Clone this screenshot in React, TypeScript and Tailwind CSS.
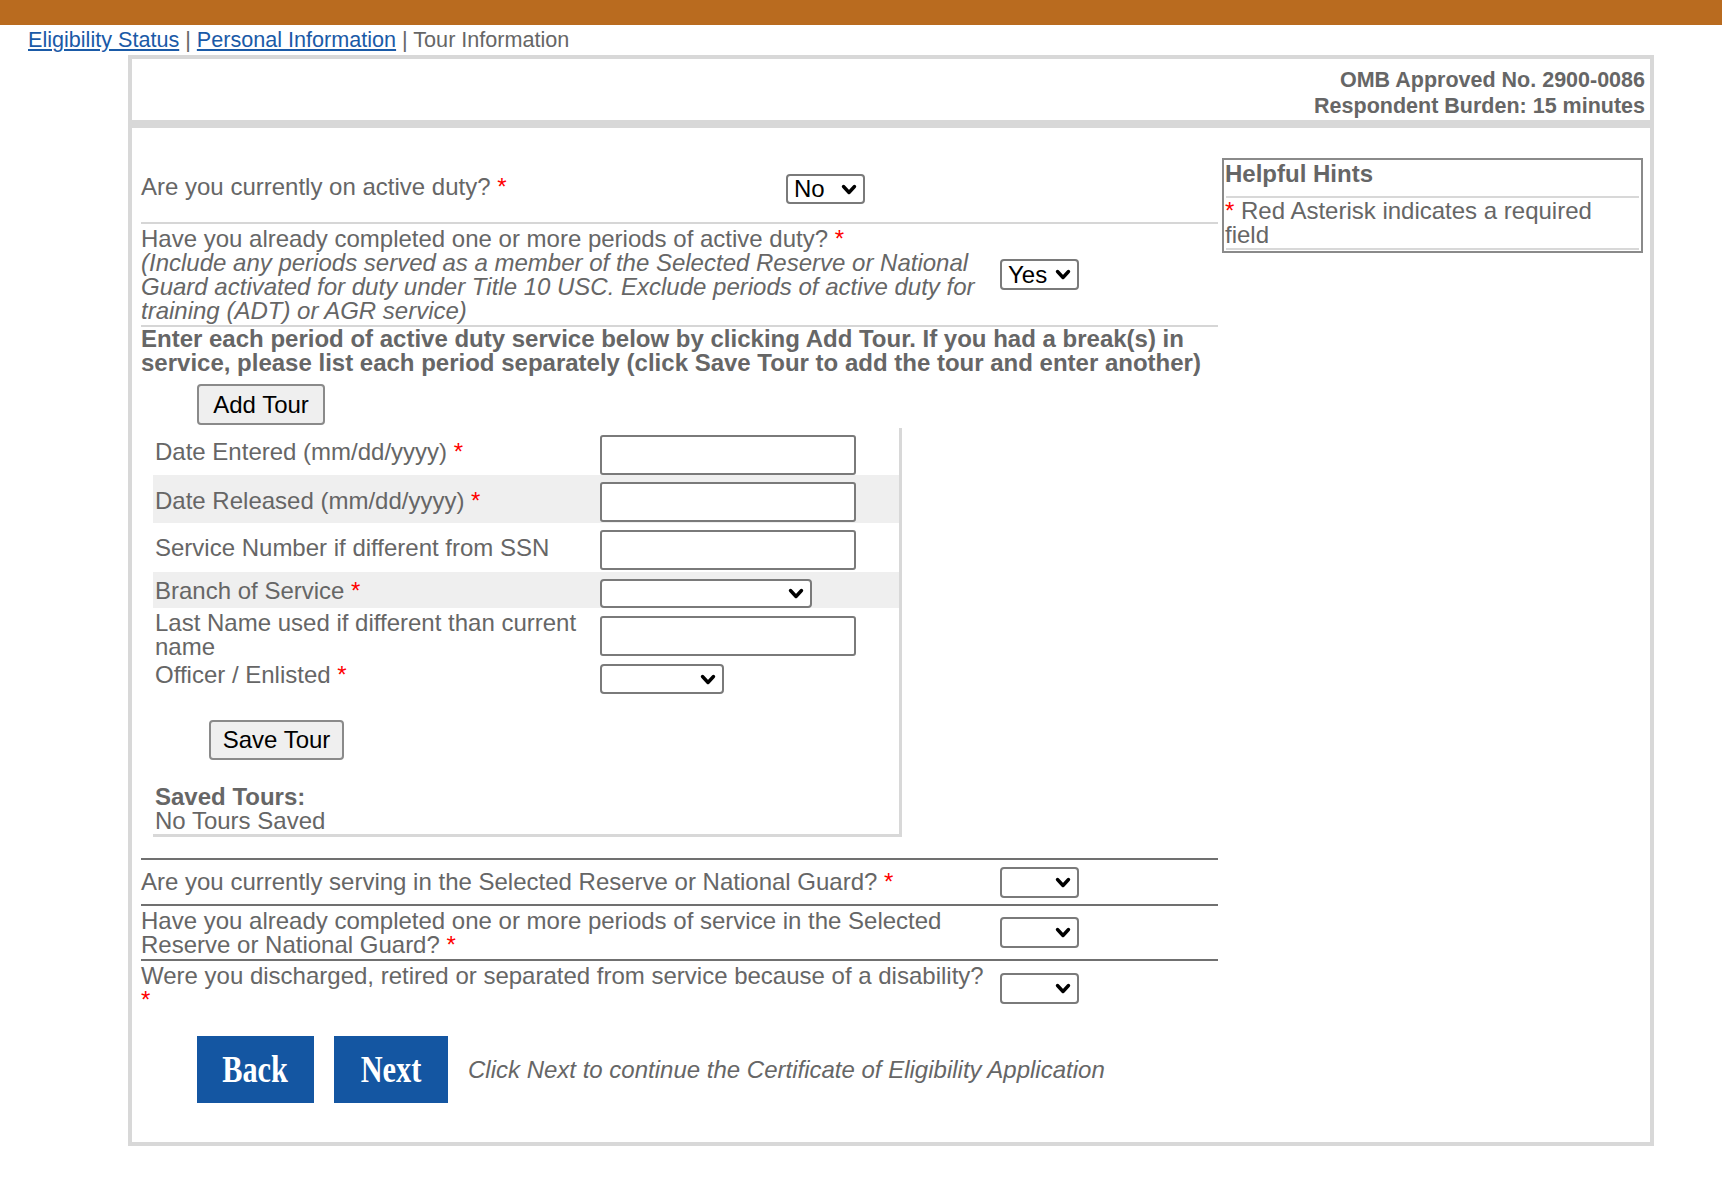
import React from "react";

function Req() {
  return <span className="text-[#ff0000]"> *</span>;
}

function Chevron() {
  return (
    <svg width="16" height="11" viewBox="0 0 16 11" className="shrink-0">
      <polyline points="2.5,2.5 8,8.5 13.5,2.5" fill="none" stroke="#000" strokeWidth="3.4" strokeLinecap="round" strokeLinejoin="round" />
    </svg>
  );
}

function Select({ value, size }: { value?: string; size: string }) {
  return (
    <div className={`${size} flex items-center justify-between rounded-[4px] border-2 border-[#7a7a7a] bg-white pl-[6px] pr-[6px] text-[24px] leading-[24px] text-black`}>
      <span>{value ?? ""}</span>
      <Chevron />
    </div>
  );
}

function TextBox() {
  return <div className="h-[40px] w-[256px] rounded-[3px] border-2 border-[#7a7a7a] bg-white" />;
}

function GrayButton({ label, size }: { label: string; size: string }) {
  return (
    <button className={`${size} rounded-[4px] border-2 border-[#8a8a8a] bg-[#efefef] text-[24px] leading-[24px] text-black`}>
      {label}
    </button>
  );
}

function TourRow({
  label,
  field,
  h,
  gray,
  labelTop,
  fieldTop,
}: {
  label: React.ReactNode;
  field: React.ReactNode;
  h: string;
  gray?: boolean;
  labelTop: string;
  fieldTop: string;
}) {
  return (
    <div className={`flex ${h} ${gray ? "bg-[#efefef]" : ""}`}>
      <div className={`w-[447px] pl-[2px] ${labelTop}`}>{label}</div>
      <div className={fieldTop}>{field}</div>
    </div>
  );
}

export default function App() {
  return (
    <div className="min-h-screen bg-white font-['Liberation_Sans',Arial,sans-serif] text-[#666]">
      <div className="h-[25px] bg-[#b96b1f]" />

      {/* breadcrumb */}
      <div className="flex h-[30px] items-center pl-[28px] text-[21.6px] leading-[24px] whitespace-pre">
        <a className="text-[#1a5aa7] underline underline-offset-2">Eligibility Status</a>
        <span> | </span>
        <a className="text-[#1a5aa7] underline underline-offset-2">Personal Information</a>
        <span> | Tour Information</span>
      </div>

      <div className="ml-[128px] w-[1526px]">
        {/* OMB header */}
        <div className="border-4 border-[#d8d8d8] pt-[8px] pb-[1px] pr-[5px] text-right text-[21.5px] font-bold leading-[26px]">
          <div>OMB Approved No. 2900-0086</div>
          <div>Respondent Burden: 15 minutes</div>
        </div>

        <div className="flex border-4 border-[#d8d8d8] text-[24px] leading-[24px]">
          {/* form column */}
          <div className="ml-[9px] w-[1077px] pt-[23px] pb-[39px]">
            <div className="grid h-[73px] grid-cols-[637px_1fr] items-center gap-x-[8px] border-b-2 border-[#d6d6d6]">
              <div>
                Are you currently on active duty?<Req />
              </div>
              <div className="mt-[5px]">
                <Select value="No" size="w-[79px] h-[30px]" />
              </div>
            </div>

            <div className="grid h-[103px] grid-cols-[851px_1fr] items-center gap-x-[8px] border-b-2 border-[#d6d6d6]">
              <div>
                <div>
                  Have you already completed one or more periods of active duty?<Req />
                </div>
                <div className="italic">
                  (Include any periods served as a member of the Selected Reserve or National Guard activated for duty under Title 10 USC. Exclude periods of active duty for training (ADT) or AGR service)
                </div>
              </div>
              <Select value="Yes" size="w-[79px] h-[31px]" />
            </div>

            <div className="font-bold">
              Enter each period of active duty service below by clicking Add Tour. If you had a break(s) in service, please list each period separately (click Save Tour to add the tour and enter another)
            </div>

            <div className="mt-[9px] ml-[56px]">
              <GrayButton label="Add Tour" size="w-[128px] h-[41px]" />
            </div>

            {/* tour table */}
            <div className="mt-[3px] ml-[12px] w-[749px] border-r-[3px] border-b-[3px] border-[#d8d8d8] pb-[1px]">
              <TourRow
                h="h-[47px]"
                labelTop="pt-[12px]"
                fieldTop="pt-[7px]"
                label={<>Date Entered (mm/dd/yyyy)<Req /></>}
                field={<TextBox />}
              />
              <TourRow
                gray
                h="h-[48px]"
                labelTop="pt-[14px]"
                fieldTop="pt-[7px]"
                label={<>Date Released (mm/dd/yyyy)<Req /></>}
                field={<TextBox />}
              />
              <TourRow
                h="h-[49px]"
                labelTop="pt-[13px]"
                fieldTop="pt-[7px]"
                label="Service Number if different from SSN"
                field={<TextBox />}
              />
              <TourRow
                gray
                h="h-[36px]"
                labelTop="pt-[7px]"
                fieldTop="pt-[7px]"
                label={<>Branch of Service<Req /></>}
                field={<Select size="w-[212px] h-[29px]" />}
              />
              <TourRow
                h="h-[52px]"
                labelTop="pt-[3px]"
                fieldTop="pt-[8px]"
                label="Last Name used if different than current name"
                field={<TextBox />}
              />
              <TourRow
                h="h-[36px]"
                labelTop="pt-[3px]"
                fieldTop="pt-[4px]"
                label={<>Officer / Enlisted<Req /></>}
                field={<Select size="w-[124px] h-[30px]" />}
              />
              <div className="mt-[24px] ml-[56px]">
                <GrayButton label="Save Tour" size="w-[135px] h-[40px]" />
              </div>
              <div className="mt-[25px] pl-[2px]">
                <div className="font-bold">Saved Tours:</div>
                <div>No Tours Saved</div>
              </div>
            </div>

            {/* reserve questions */}
            <div className="mt-[21px]">
              <div className="grid h-[46px] grid-cols-[851px_1fr] items-center gap-x-[8px] border-t-2 border-[#707070]">
                <div>
                  Are you currently serving in the Selected Reserve or National Guard?<Req />
                </div>
                <Select size="w-[79px] h-[31px]" />
              </div>
              <div className="grid h-[55px] grid-cols-[851px_1fr] items-center gap-x-[8px] border-t-2 border-[#707070]">
                <div>
                  Have you already completed one or more periods of service in the Selected Reserve or National Guard?<Req />
                </div>
                <Select size="w-[79px] h-[31px]" />
              </div>
              <div className="grid h-[56px] grid-cols-[851px_1fr] items-center gap-x-[8px] border-t-2 border-[#707070]">
                <div>
                  Were you discharged, retired or separated from service because of a disability?<Req />
                </div>
                <Select size="w-[79px] h-[31px]" />
              </div>
            </div>

            <div className="mt-[21px] ml-[56px] flex items-center">
              <button className="flex h-[67px] w-[117px] items-center justify-center bg-[#1456a2] text-white">
                <span className="inline-block scale-x-[0.82] font-['Liberation_Serif',serif] text-[37px] font-bold leading-[37px]">Back</span>
              </button>
              <button className="ml-[20px] flex h-[67px] w-[114px] items-center justify-center bg-[#1456a2] text-white">
                <span className="inline-block scale-x-[0.82] font-['Liberation_Serif',serif] text-[37px] font-bold leading-[37px]">Next</span>
              </button>
              <span className="ml-[20px] italic">Click Next to continue the Certificate of Eligibility Application</span>
            </div>
          </div>

          {/* helpful hints */}
          <div className="ml-[4px] w-[421px]">
            <div className="mt-[30px] border-2 border-[#8a8a8a] pb-[1px]">
              <div className="h-[36px] pt-[2px] pl-[1px] font-bold">Helpful Hints</div>
              <div className="mx-[2px] h-[2px] bg-[#d8d8d8]" />
              <div className="py-[1px] pl-[1px]">
                <span className="text-[#ff0000]">*</span> Red Asterisk indicates a required field
              </div>
              <div className="mx-[2px] h-[2px] bg-[#d8d8d8]" />
            </div>
          </div>
        </div>
      </div>
    </div>
  );
}
